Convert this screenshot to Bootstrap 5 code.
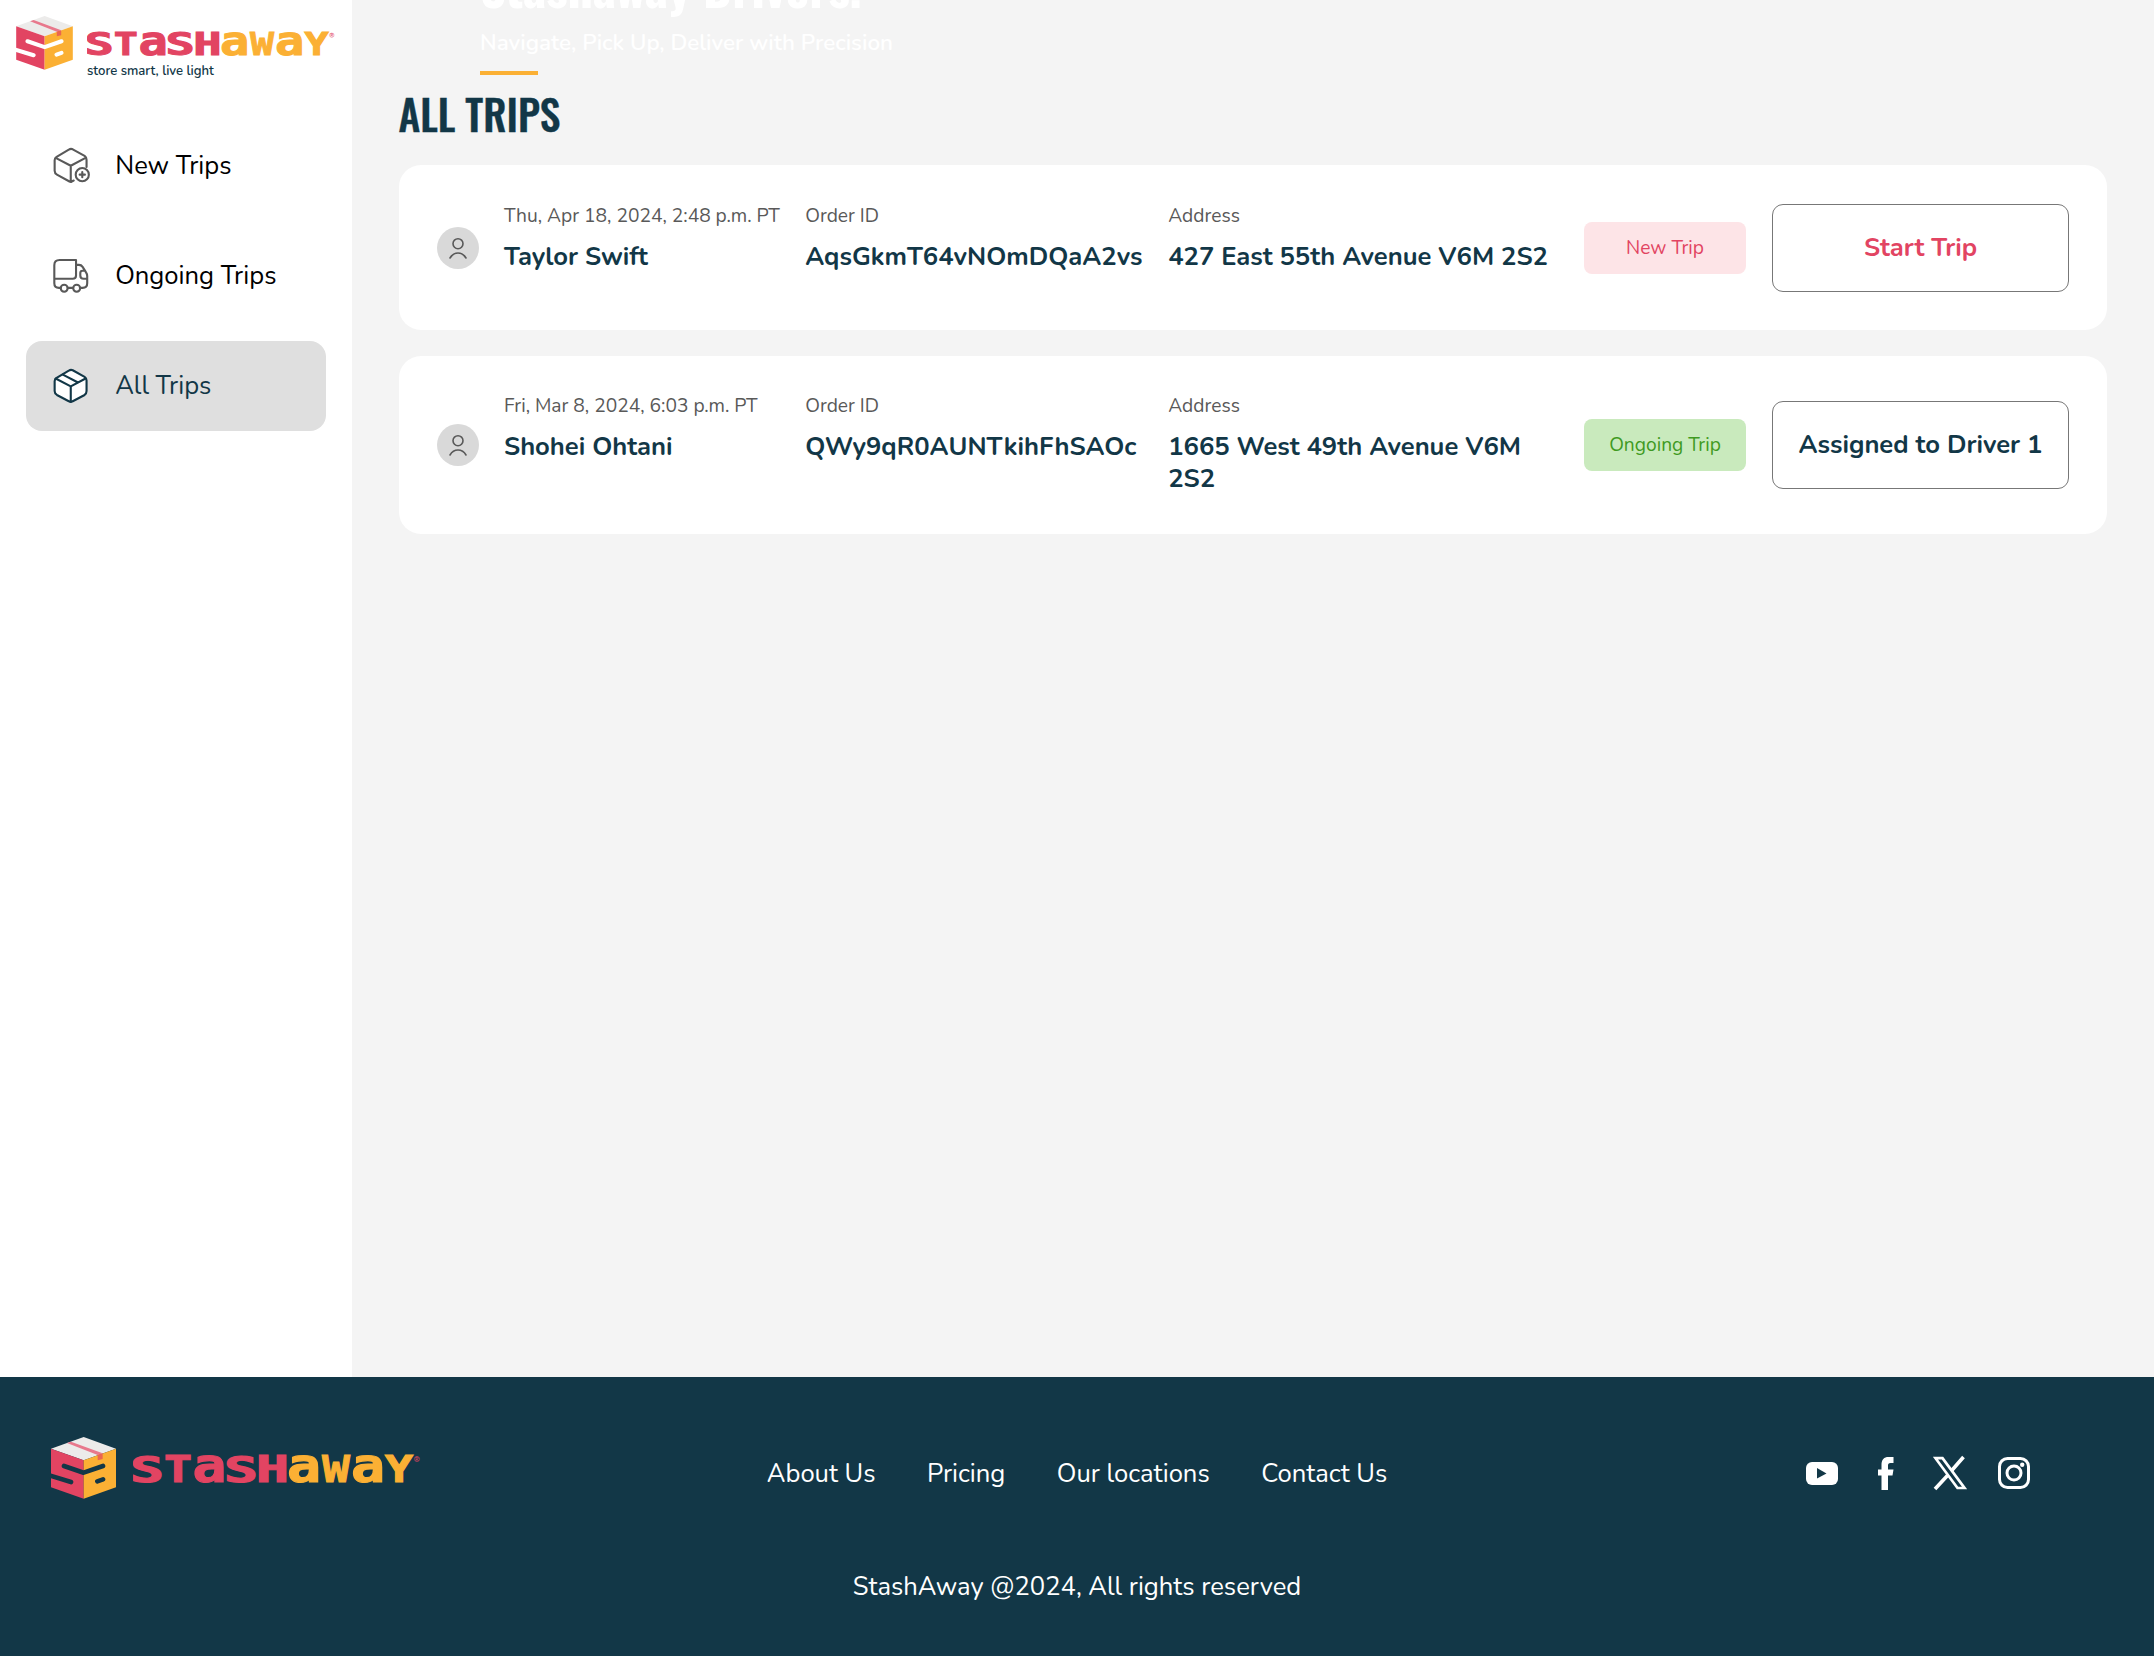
<!DOCTYPE html>
<html lang="en">
<head>
<meta charset="utf-8">
<title>StashAway - All Trips</title>
<link rel="stylesheet" href="https://cdn.jsdelivr.net/npm/bootstrap@5.3.0/dist/css/bootstrap.min.css">
<style>
:root{--navy:#123747;--pink:#e24462;--gold:#fbb034}
body{font-family:Nunito,Lato,sans-serif;font-size:25.6px;line-height:1.2;color:#000;background:#f4f4f4;height:1656px;overflow:hidden}
.shell{height:1377px}
.side{width:352px;background:#fff;padding:16px 26px 0}
.brand{margin-left:-10px;height:60px;color:#fff}
.brand-cube{width:57px;height:54px}
.brand-text{padding:15px 0 0 14px}
.brand-word{width:252px;height:27.6px;flex:none}
.brand-tag{font-size:13.1px;font-weight:600;color:var(--navy);line-height:14px;margin-top:5px}
.side .nav{gap:20px;margin-top:45px}
.side .nav-link{height:90px;padding:0 26.7px;gap:25px;border-radius:16px;color:#000;font-size:25.6px}
.side .nav-link svg{width:37.5px;height:37.5px;color:#595959;flex:none}
.side .nav-link.active{background:#dfdfdf;color:var(--navy)}
.side .nav-link.active svg{color:var(--navy)}
.ico{fill:none;stroke:currentColor;stroke-width:6.4;stroke-linejoin:round;stroke-linecap:round}
.content{padding:0 47px;overflow:hidden}
.hero{padding-left:81px;color:#fff}
.hero h1{font:700 50px/60px Oswald,sans-serif;margin:-45px 0 14px}
.hero p{font-size:22.4px;font-weight:600;line-height:28px;margin:0 0 14px}
.hero-bar{width:58px;height:4px;background:var(--gold)}
.page-title{font:500 41.6px/50px Oswald,sans-serif;color:var(--navy);margin:13px 0 27px -.5px;-webkit-text-stroke:.4px var(--navy)}
.trip{border:0;border-radius:22px;padding:38.5px 38px;gap:26px;min-height:165px;margin-bottom:26px}
.trip-tall{min-height:178px;padding-top:37.5px;padding-bottom:37.5px}
.avatar{width:42px;height:42px;border-radius:50%;background:#d9d9d9;color:#595959;margin-right:-1px}
.lbl{font-size:19.2px;color:#595959;line-height:25.4px;margin-bottom:12px}
.val{font-weight:700;color:var(--navy);line-height:32px;margin-bottom:0}
.c-date,.c-order{white-space:nowrap;flex:none}
.c-date{width:275.2px}.c-order{width:337px}
.c-addr{flex:1 1 0;min-width:0}
.state{flex:none;width:162px;height:52px;border-radius:8px;font-size:19.2px;padding-top:1.500px}
.state-new{background:#fde4e7;color:var(--pink)}
.state-on{background:#c9eabd;color:#3f9a22}
.act{flex:none;width:297px;height:88px;border:1px solid #777;border-radius:11px;font-size:25.6px;font-weight:700;padding:0;white-space:nowrap;background:#fff}
.act-start{color:var(--pink);padding-top:1.500px}.act-done{color:var(--navy)}
.foot{height:279px;background:var(--navy);color:#fff;padding:60px 51px 0}
.foot .brand-lg{color:var(--navy);gap:17px;padding-right:71px}
.brand-lg .brand-cube{width:65px;height:62px}
.brand-lg .brand-word{width:292px;height:32px;margin-top:17px}
.foot a{color:#fff;text-decoration:none}
.foot-col{flex:1 1 0;height:72px}
.foot-links{gap:51.5px;height:73px;padding-top:1.500px}
.social{gap:28px;padding-right:71px}
.copy{margin-top:62px}
</style>
<script src="https://cdn.jsdelivr.net/npm/bootstrap@5.3.0/dist/js/bootstrap.bundle.min.js"></script>
</head>
<body>
<svg class="d-none" xmlns="http://www.w3.org/2000/svg">
  <symbol id="cube" viewBox="63 231 195 186">
    <path d="M161 231 258 266 161 301 63 266Z" fill="#ecebea"/>
    <path d="M63 266 161 301V416L63 382Z" fill="#e24462"/>
    <path d="M258 266V382L161 416V301Z" fill="#fbb034"/>
    <path d="M111 249 123 245 218 280 203 285Z" fill="#e8788c"/>
    <path d="M203 284 218 280V297L203 301Z" fill="#ea6550"/>
    <path d="M102 318 161 338 219 318M58 346 123 366M202 364 219 358" fill="none" stroke="currentColor" stroke-width="14" stroke-linecap="round" stroke-linejoin="round"/>
  </symbol>
  <symbol id="word" viewBox="0 0 292 32">
    <g font-family="'DejaVu Sans Mono','DejaVu Sans',monospace" font-weight="700">
      <g fill="#e24462" stroke="#e24462" stroke-width="1.2">
        <text x="-3" y="27.500" font-size="36" textLength="34" lengthAdjust="spacingAndGlyphs">S</text>
        <text x="31" y="27.500" font-size="37" textLength="28" lengthAdjust="spacingAndGlyphs">T</text>
        <text x="59.500" y="27.500" font-size="48" textLength="34" lengthAdjust="spacingAndGlyphs">a</text>
        <text x="91" y="27.500" font-size="36" textLength="34" lengthAdjust="spacingAndGlyphs">S</text>
        <text x="123" y="27.500" font-size="37" textLength="33" lengthAdjust="spacingAndGlyphs">H</text>
        <text x="281" y="8" font-size="9" font-weight="400" stroke="none">®</text>
      </g>
      <g fill="#fbb034" stroke="#fbb034" stroke-width="1.2">
        <text x="154" y="27.500" font-size="48" textLength="34" lengthAdjust="spacingAndGlyphs">a</text>
        <text x="189" y="27.500" font-size="49" textLength="28" lengthAdjust="spacingAndGlyphs">w</text>
        <text x="218" y="27.500" font-size="48" textLength="34" lengthAdjust="spacingAndGlyphs">a</text>
        <text x="252" y="27.500" font-size="37" textLength="28" lengthAdjust="spacingAndGlyphs">Y</text>
      </g>
    </g>
  </symbol>
  <symbol id="person" viewBox="0 0 42 42">
    <g fill="none" stroke="currentColor" stroke-width="1.6" stroke-linecap="round"><circle cx="21" cy="16.7" r="5"/><path d="M13 31C15 27.500 18 26 21 26S27 27.500 29 31"/></g>
  </symbol>
</svg>

<div class="shell d-flex">
  <aside class="side flex-shrink-0">
    <div class="brand d-flex">
      <svg class="brand-cube flex-shrink-0"><use href="#cube"/></svg>
      <div class="brand-text d-flex flex-column flex-shrink-0">
        <svg class="brand-word"><use href="#word"/></svg>
        <span class="brand-tag">store smart, live light</span>
      </div>
    </div>
    <nav class="nav nav-pills flex-column">
      <a class="nav-link d-flex align-items-center" href="#">
        <svg class="ico" viewBox="38 51 114 114"><path d="M101 153 95 156Q92 158 88 156L50 135Q43 131 43 123V91Q43 85 49 81L86 59Q92 55 98 58L134 78Q140 82 140 90V112M46 84 92 108 137 84M92 108V156"/><circle cx="127" cy="135" r="20"/><path d="M127 127V143M119 135H135"/></svg>
        New Trips</a>
      <a class="nav-link d-flex align-items-center" href="#">
        <svg class="ico" viewBox="38 381 114 114"><path d="M108 390H58Q42 390 42 406V461Q42 475 56 475H61M83 475H99M121 475H128Q142 475 142 461V439Q142 433 138 427L128 411Q124 405 117 405H108M108 390V437Q108 447 98 447H42M142 447H131Q121 447 121 437V430Q121 423 128 423H135"/><circle cx="72" cy="476" r="10.500"/><circle cx="110" cy="476" r="10.500"/></svg>
        Ongoing Trips</a>
      <a class="nav-link active d-flex align-items-center" href="#">
        <svg class="ico" viewBox="38 711 114 114"><path fill="#fff" d="M98 815Q92 819 86 815L50 796Q43 792 43 784V754Q43 748 49 744L86 722Q92 718 98 721L134 741Q140 745 140 752V784Q140 792 134 796Z"/><path d="M46 746 92 770 137 746M92 770V816M68 734 114 758"/></svg>
        All Trips</a>
    </nav>
  </aside>

  <main class="content flex-grow-1">
    <header class="hero">
      <h1>Stashaway Drivers!</h1>
      <p>Navigate, Pick Up, Deliver with Precision</p>
      <div class="hero-bar"></div>
    </header>
    <h2 class="page-title">ALL TRIPS</h2>

    <section class="card trip flex-row align-items-center">
      <svg class="avatar flex-shrink-0"><use href="#person"/></svg>
      <div class="c-date align-self-start"><p class="lbl">Thu, Apr 18, 2024, 2:48 p.m. PT</p><p class="val">Taylor Swift</p></div>
      <div class="c-order align-self-start"><p class="lbl">Order ID</p><p class="val">AqsGkmT64vNOmDQaA2vs</p></div>
      <div class="c-addr align-self-start"><p class="lbl">Address</p><p class="val">427 East 55th Avenue V6M 2S2</p></div>
      <span class="state state-new d-flex align-items-center justify-content-center">New Trip</span>
      <button class="btn act act-start">Start Trip</button>
    </section>

    <section class="card trip trip-tall flex-row align-items-center">
      <svg class="avatar flex-shrink-0"><use href="#person"/></svg>
      <div class="c-date align-self-start"><p class="lbl">Fri, Mar 8, 2024, 6:03 p.m. PT</p><p class="val">Shohei Ohtani</p></div>
      <div class="c-order align-self-start"><p class="lbl">Order ID</p><p class="val">QWy9qR0AUNTkihFhSAOc</p></div>
      <div class="c-addr align-self-start"><p class="lbl">Address</p><p class="val">1665 West 49th Avenue V6M 2S2</p></div>
      <span class="state state-on d-flex align-items-center justify-content-center">Ongoing Trip</span>
      <button class="btn act act-done">Assigned to Driver 1</button>
    </section>
  </main>
</div>

<footer class="foot">
  <div class="d-flex">
    <div class="foot-col brand-lg d-flex">
      <svg class="brand-cube"><use href="#cube"/></svg>
      <svg class="brand-word"><use href="#word"/></svg>
    </div>
    <nav class="foot-links d-flex align-items-center">
      <a href="#">About Us</a><a href="#">Pricing</a><a href="#">Our locations</a><a href="#">Contact Us</a>
    </nav>
    <div class="foot-col social d-flex align-items-center justify-content-end">
      <svg width="36" height="36" viewBox="0 0 36 36"><rect x="2" y="7" width="32" height="23" rx="6" fill="#fff"/><path d="M13 13 22.500 18.500 13 23.500Z" fill="#123747"/></svg>
      <svg width="36" height="36" viewBox="0 0 36 36"><path fill="#fff" d="M13.500 35V20.500H10V14.500H13.500V10C13.500 4.500 16 2 20.500 2H25.500V8H22.500C20.500 8 20 9 20 10.500V14.500H25.500L24.500 20.500H20V35Z"/></svg>
      <svg width="36" height="36" viewBox="0 0 36 36"><path fill="none" stroke="#fff" stroke-width="2.700" d="M3.500 3.200H10.500L32.500 33H25.500Z"/><path d="M31.500 2 19.500 15.800M15.500 20.500 3 34" stroke="#fff" stroke-width="3.600" fill="none"/></svg>
      <svg width="36" height="36" viewBox="0 0 36 36"><g fill="none" stroke="#fff" stroke-width="3"><rect x="3.500" y="3.500" width="29" height="29" rx="8"/><circle cx="18" cy="18" r="7"/></g><circle cx="26.200" cy="9.800" r="2.200" fill="#fff"/></svg>
    </div>
  </div>
  <p class="copy text-center mb-0">StashAway @2024, All rights reserved</p>
</footer>
</body>
</html>
